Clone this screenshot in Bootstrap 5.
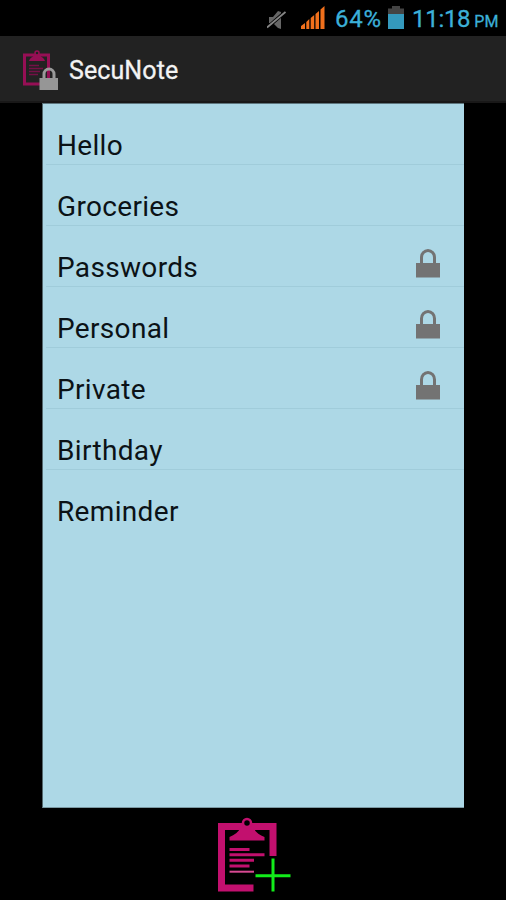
<!DOCTYPE html>
<html lang="en">
<head>
<meta charset="utf-8">
<meta name="viewport" content="width=device-width, initial-scale=1">
<title>SecuNote</title>
<link href="https://cdn.jsdelivr.net/npm/bootstrap@5.3.0/dist/css/bootstrap.min.css" rel="stylesheet">
<style>
body { background: #000; font-family: Roboto, "Liberation Sans", sans-serif; }
.phone { width: 506px; height: 900px; }
.statusbar { height: 36px; color: #3cb0d8; padding-right: 8px; padding-top: 1px; }
.status-text { font-size: 24px; line-height: 36px; -webkit-text-stroke: .3px #3cb0d8; }
.battery-level { letter-spacing: .7px; width: 47px; }
.clock { letter-spacing: -.3px; width: 86px; }
.ampm { font-size: 16px; letter-spacing: 0; margin-left: 4px; }
.mute { margin: 9px 15px 0 0; }
.signal { margin: 5px 10px 0 0; }
.battery { margin: 5px 8px 0 6px; }
.appbar { height: 67px; background: #222; border-bottom: 2px solid #191818; padding: 4px 0 0 22px; }
.app-title { font-size: 25px; line-height: 30px; letter-spacing: .1px; color: #f3f3f3; margin-left: 9px; -webkit-text-stroke: .3px #f3f3f3; }
.notes { width: 422px; height: 705px; background: #add8e6; border-radius: 0; border-left: 1px solid #53686e; border-top: 1px solid #5e767e; border-bottom: 1px solid #7b99a3; }
.notes .note { height: 61px; margin-left: 3px; padding: 21px 24.500px 0 11px; background: transparent; color: #0b1216; border: 0; border-bottom: 1px solid #a0ccda; border-radius: 0; font-size: 28px; line-height: 42px; letter-spacing: .33px; }
.notes .note:last-child { border-bottom: 0; }
.lock { margin-top: 2px; }
.add-note { height: 92px; padding-left: 4px; }
</style>
</head>
<body>
<div class="phone d-flex flex-column overflow-hidden">
  <div class="statusbar d-flex justify-content-end align-items-start flex-shrink-0">
    <svg class="mute" width="19" height="20" viewBox="0 0 19 20">
      <path d="M2 7h4l5-6 3 1v17l-3-1-5-5H2z" fill="#666"/>
      <path d="M1 17 18 2" stroke="#000" stroke-width="3.500"/>
      <path d="M0 17.500 18.500 2" stroke="#858585" stroke-width="1.800"/>
    </svg>
    <svg class="signal" width="24" height="24" viewBox="0 0 24 24">
      <path d="M0 23v-3l4-3v6zM5.300 23v-7l3-3v10zM9.700 23v-11l3.500-3v14zM14.500 23v-15l3.500-3v18zM19.500 23v-19.500l4-3.500v23z" fill="#f0701c"/>
    </svg>
    <span class="status-text battery-level">64%</span>
    <svg class="battery" width="16" height="23" viewBox="0 0 16 23">
      <path d="M0 2.500h4V0h8v2.500h4V9H0z" fill="#444"/>
      <path d="M0 8h16v15H0z" fill="#3499bd"/>
    </svg>
    <span class="status-text clock text-nowrap">11:18<span class="ampm">PM</span></span>
  </div>
  <header class="appbar d-flex align-items-center flex-shrink-0">
    <svg width="38" height="42" viewBox="0 0 38 42" class="flex-shrink-0">
      <rect x="2.500" y="5" width="24" height="29" fill="none" stroke="#960f55" stroke-width="3"/>
      <path d="M7 11c1-4 5-4 6-7h4c1 3 5 3 6 7z" fill="#960f55"/>
      <circle cx="15" cy="3" r="2" fill="#222" stroke="#960f55" stroke-width="1.500"/>
      <path d="M7 15.500h10M7 18.500h14M7 21.500h11M7 24.500h9" stroke="#751047" stroke-width="1.300"/>
      <path d="M22 28v-4a5 5 0 0 1 10 0v4" fill="none" stroke="#9a9a9a" stroke-width="3"/>
      <path d="M17.500 28h18.500v12H17.500z" fill="#969696"/>
    </svg>
    <span class="app-title">SecuNote</span>
  </header>
  <main class="notes list-group mx-auto flex-shrink-0">
    <div class="note list-group-item">Hello</div>
    <div class="note list-group-item">Groceries</div>
    <div class="note list-group-item d-flex justify-content-between align-items-start">Passwords
      <svg class="lock" width="24" height="29" viewBox="0 0 24 29"><path d="M5.500 15V8.500a6.500 7 0 0 1 13 0V15" fill="none" stroke="#737373" stroke-width="3"/><path d="M0 14h24v14.500H0z" fill="#737373"/></svg></div>
    <div class="note list-group-item d-flex justify-content-between align-items-start">Personal
      <svg class="lock" width="24" height="29" viewBox="0 0 24 29"><path d="M5.500 15V8.500a6.500 7 0 0 1 13 0V15" fill="none" stroke="#737373" stroke-width="3"/><path d="M0 14h24v14.500H0z" fill="#737373"/></svg></div>
    <div class="note list-group-item d-flex justify-content-between align-items-start">Private
      <svg class="lock" width="24" height="29" viewBox="0 0 24 29"><path d="M5.500 15V8.500a6.500 7 0 0 1 13 0V15" fill="none" stroke="#737373" stroke-width="3"/><path d="M0 14h24v14.500H0z" fill="#737373"/></svg></div>
    <div class="note list-group-item">Birthday</div>
    <div class="note list-group-item">Reminder</div>
  </main>
  <footer class="add-note d-flex justify-content-center align-items-start">
    <svg width="100" height="92" viewBox="205 808 100 92">
      <path d="M253.500 888H221.500V826.500H273V856" fill="none" stroke="#c2106e" stroke-width="7"/>
      <path d="M229.500 840.500v-3.500c5-2 9-5 11-9l3-1.500h7l3 1.500c2 4 6 7 11 9v3.500z" fill="#c2106e"/>
      <circle cx="247" cy="823" r="4" fill="#000" stroke="#c2106e" stroke-width="2.500"/>
      <path d="M229.500 849.500h20M229.500 854.700h35M229.500 860.300h24.500M229.500 866h20" stroke="#c2106e" stroke-width="3"/>
      <path d="M229.500 871.700h24.500" stroke="#d84a93" stroke-width="2"/>
      <path d="M255.500 875.700h35M273 858.500v33" stroke="#12ec1a" stroke-width="3"/>
    </svg>
  </footer>
</div>
<script src="https://cdn.jsdelivr.net/npm/bootstrap@5.3.0/dist/js/bootstrap.bundle.min.js"></script>
</body>
</html>
